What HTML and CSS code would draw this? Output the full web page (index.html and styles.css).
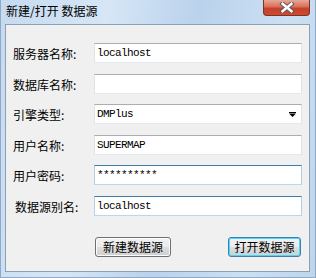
FILE: index.html
```html
<!DOCTYPE html>
<html lang="zh">
<head>
    <meta charset="UTF-8">
    <title>新建/打开 数据源</title>
    <link rel="stylesheet" href="styles.css">
</head>
<body>
    <div class="window">
        <div class="titlebar">
            <span class="title">新建/打开 数据源</span>
            <div class="close-btn">
                <svg width="16" height="11" viewBox="0 0 16 11">
                    <path d="M3.5 1.8 L12.5 9.2 M12.5 1.8 L3.5 9.2" stroke="#5a5a5a" stroke-width="4.4" stroke-linecap="square"/>
                    <path d="M3.5 1.8 L12.5 9.2 M12.5 1.8 L3.5 9.2" stroke="#ffffff" stroke-width="2.4" stroke-linecap="square"/>
                </svg>
            </div>
        </div>
        <div class="client">
            <div class="form">
                <label>服务器名称:</label>
                <div class="field">localhost</div>

                <label>数据库名称:</label>
                <div class="field"></div>

                <label>引擎类型:</label>
                <div class="field combo">
                    <span>DMPlus</span>
                    <svg class="arrow" width="7" height="5" viewBox="0 0 7 5">
                        <rect x="0" y="0" width="7" height="1" fill="#000"/>
                        <polygon points="0,1.5 7,1.5 3.5,5" fill="#000"/>
                    </svg>
                </div>

                <label>用户名称:</label>
                <div class="field">SUPERMAP</div>

                <label>用户密码:</label>
                <div class="field hot">**********</div>

                <label class="indent">数据源别名:</label>
                <div class="field hot">localhost</div>
            </div>
            <div class="actions">
                <button type="button" class="btn">新建数据源</button>
                <button type="button" class="btn default">打开数据源</button>
            </div>
        </div>
    </div>
</body>
</html>
```

FILE: styles.css
```css
body {
    margin: 0;
    font-family: "Noto Sans CJK SC", "Noto Sans", sans-serif;
    font-size: 12px;
    color: #000;
}

.window {
    width: 316px;
    height: 278px;
    box-sizing: border-box;
    display: flex;
    flex-direction: column;
    background: linear-gradient(100deg, #c6daf0 0%, #d6e6f6 30%, #bad2ec 55%, #cce0f3 80%, #bfd5ec 100%);
    border-left: 1px solid #8fa9c6;
    border-right: 1px solid #8fa9c6;
    border-bottom: 1px solid #8fa9c6;
    padding: 0 5px 5px 4px;
}

.titlebar {
    height: 24px;
    display: flex;
    justify-content: space-between;
    align-items: flex-start;
}

.title {
    padding-left: 1px;
    line-height: 24px;
    margin-top: -1px;
}

.close-btn {
    width: 47px;
    height: 16px;
    box-sizing: border-box;
    border: 1px solid #7a3324;
    border-top: none;
    border-radius: 0 0 4px 4px;
    background: linear-gradient(#e8a796 0%, #d7705b 45%, #c4412a 55%, #cf4a2f 100%);
    display: flex;
    justify-content: center;
    align-items: center;
}

.client {
    flex: 1;
    background-color: #f0f0f0;
    border: 1px solid #8b9fb6;
    padding: 18px 7px 0 7px;
}

.form {
    display: grid;
    grid-template-columns: 81px 208px;
    grid-auto-rows: 20px;
    row-gap: 10.6px;
    align-items: center;
}

label {
    padding-top: 1px;
}

label.indent {
    padding-left: 2px;
}

.field {
    height: 20px;
    box-sizing: border-box;
    background-color: #fff;
    border: 1px solid #e2e3ea;
    border-top-color: #abadb3;
    border-bottom-color: #e3e9ef;
    padding-left: 2px;
    font-family: "Liberation Mono", monospace;
    font-size: 11px;
    letter-spacing: -0.6px;
    line-height: 18px;
}

.field.hot {
    border-color: #b5cfe7;
    border-top-color: #3d7bad;
    border-bottom-color: #b7d9ed;
}

.combo {
    display: flex;
    justify-content: space-between;
    align-items: center;
}

.combo .arrow {
    margin-right: 5px;
}

.actions {
    display: flex;
    justify-content: space-between;
    margin-top: 21px;
    padding-left: 82px;
    padding-right: 1px;
}

.btn {
    height: 20px;
    width: 76px;
    padding: 0;
    border: 1px solid #707070;
    border-radius: 3px;
    background: linear-gradient(#f2f2f2 0%, #ebebeb 48%, #dddddd 52%, #cfcfcf 100%);
    box-shadow: inset 0 0 0 1px #fcfcfc;
    font-family: "Noto Sans CJK SC", sans-serif;
    font-size: 12px;
    line-height: 18px;
    color: #000;
}

.btn.default {
    width: 73px;
    border-color: #3c7fb1;
    box-shadow: inset 0 0 0 1px #48d8fb;
}
```
